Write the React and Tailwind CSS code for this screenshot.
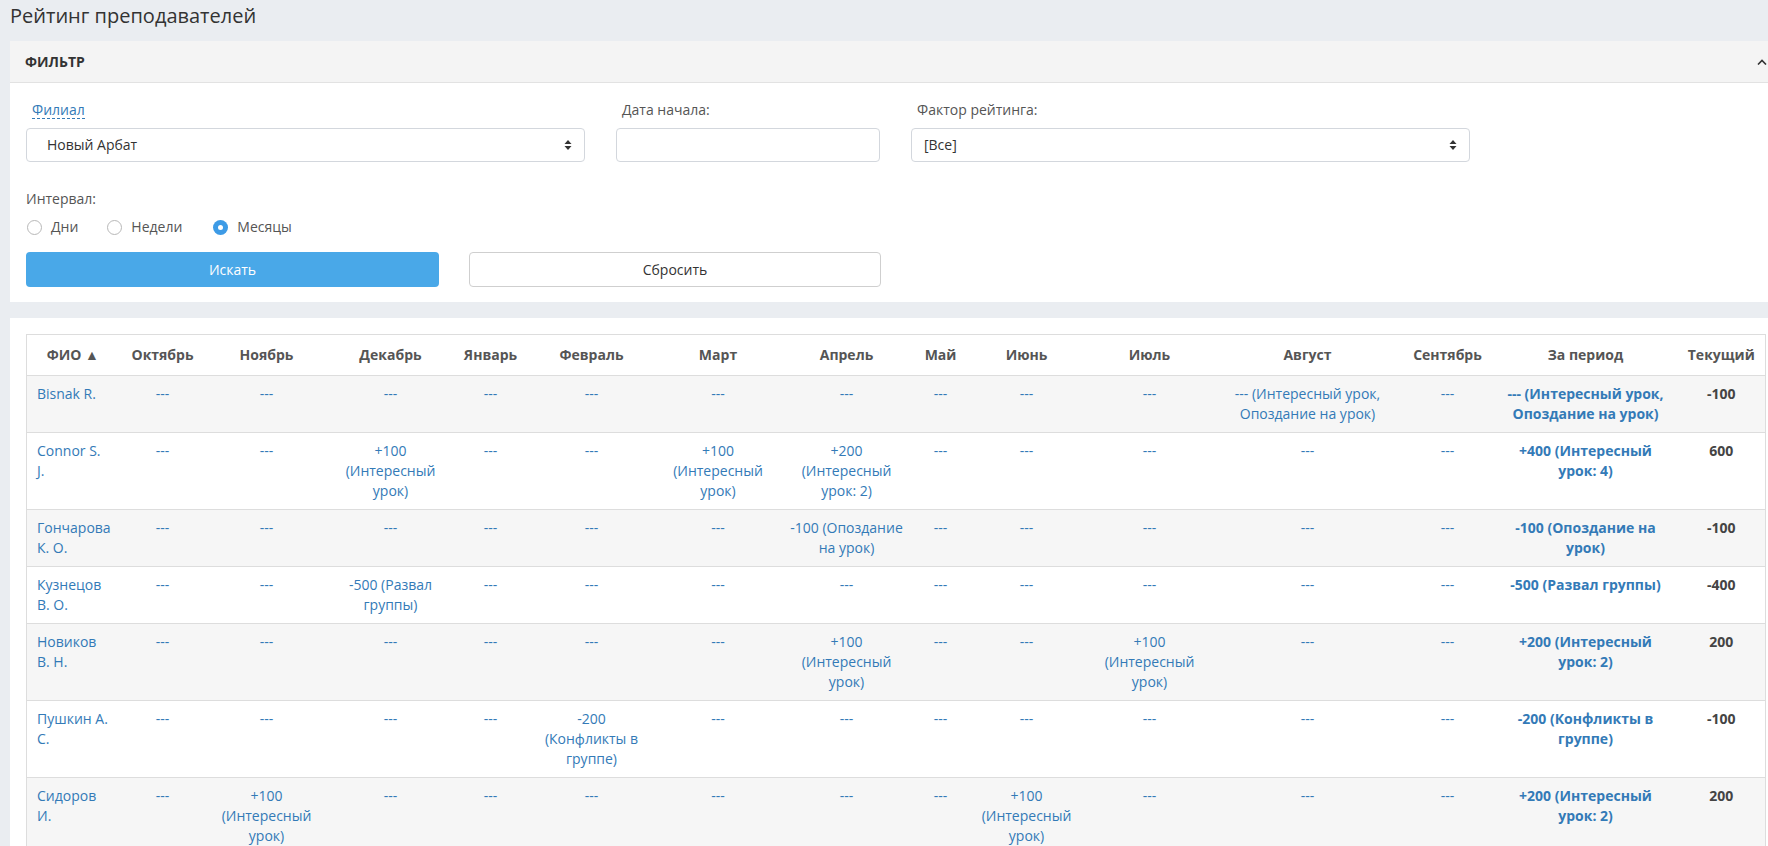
import React from "react";

const D = "---";
const I = ["+100", "(Интересный", "урок)"];

const heads = [
  { t: "ФИО ▲", w: "w-[92px]" },
  { t: "Октябрь", w: "w-[88px]" },
  { t: "Ноябрь", w: "w-[120px]" },
  { t: "Декабрь", w: "w-[128px]" },
  { t: "Январь", w: "w-[72px]" },
  { t: "Февраль", w: "w-[130px]" },
  { t: "Март", w: "w-[123px]" },
  { t: "Апрель", w: "w-[134px]" },
  { t: "Май", w: "w-[54px]" },
  { t: "Июнь", w: "w-[118px]" },
  { t: "Июль", w: "w-[128px]" },
  { t: "Август", w: "w-[188px]" },
  { t: "Сентябрь", w: "w-[92px]" },
  { t: "За период", w: "w-[184px]" },
  { t: "Текущий", w: "w-[88px]" },
];

const rows = [
  {
    name: ["Bisnak R."],
    m: [D, D, D, D, D, D, D, D, D, D, ["--- (Интересный урок,", "Опоздание на урок)"], D],
    total: ["--- (Интересный урок,", "Опоздание на урок)"],
    cur: "-100",
  },
  {
    name: ["Connor S.", "J."],
    m: [D, D, I, D, D, I, ["+200", "(Интересный", "урок: 2)"], D, D, D, D, D],
    total: ["+400 (Интересный", "урок: 4)"],
    cur: "600",
  },
  {
    name: ["Гончарова", "К. О."],
    m: [D, D, D, D, D, D, ["-100 (Опоздание", "на урок)"], D, D, D, D, D],
    total: ["-100 (Опоздание на", "урок)"],
    cur: "-100",
  },
  {
    name: ["Кузнецов", "В. О."],
    m: [D, D, ["-500 (Развал", "группы)"], D, D, D, D, D, D, D, D, D],
    total: ["-500 (Развал группы)"],
    cur: "-400",
  },
  {
    name: ["Новиков", "В. Н."],
    m: [D, D, D, D, D, D, I, D, D, I, D, D],
    total: ["+200 (Интересный", "урок: 2)"],
    cur: "200",
  },
  {
    name: ["Пушкин А.", "С."],
    m: [D, D, D, D, ["-200", "(Конфликты в", "группе)"], D, D, D, D, D, D, D],
    total: ["-200 (Конфликты в", "группе)"],
    cur: "-100",
  },
  {
    name: ["Сидоров", "И."],
    m: [D, I, D, D, D, D, D, D, I, D, D, D],
    total: ["+200 (Интересный", "урок: 2)"],
    cur: "200",
  },
];

const Lines = ({ v }) => {
  const list = Array.isArray(v) ? v : [v];
  return list.map((l, i) => <div key={i}>{l}</div>);
};

const Arrows = () => (
  <svg width="8" height="12" viewBox="0 0 8 12">
    <path d="M0.5 5 L4 1 L7.5 5 Z" fill="#333" />
    <path d="M0.5 7 L4 11 L7.5 7 Z" fill="#333" />
  </svg>
);

const Radio = ({ label, checked, gap }) => (
  <label className={"flex items-center " + gap}>
    {checked ? (
      <span className="ml-[1px] flex h-[15px] w-[15px] items-center justify-center rounded-full bg-[#3d9be6]">
        <span className="h-[5px] w-[5px] rounded-full bg-white" />
      </span>
    ) : (
      <span className="ml-[1px] h-[15px] w-[15px] rounded-full border border-[#b8b8b8] bg-white" />
    )}
    <span className="ml-[9px]">{label}</span>
  </label>
);

export default function App() {
  return (
    <div className="h-[846px] w-[1768px] overflow-hidden bg-[#eaedf1] pl-[10px] font-['Open_Sans',sans-serif] text-[14px] leading-5 text-[#555]">
      <h1 className="h-[41px] text-[20px] leading-[32px] font-normal text-[#333]">
        Рейтинг преподавателей
      </h1>

      <section className="w-[1771px] bg-white">
        <div className="flex h-[42px] items-center justify-between border-b border-[#e2e2e2] bg-[#f4f4f4] pl-[15px] pr-[14px]">
          <span className="font-bold text-[#333]">ФИЛЬТР</span>
          <svg width="10" height="6" viewBox="0 0 10 6">
            <polyline points="1,5.5 5,1.5 9,5.5" fill="none" stroke="#333" strokeWidth="1.6" />
          </svg>
        </div>

        <div className="pl-[16px] pt-[17px] pb-[15px]">
          <div className="grid grid-cols-[559px_264px_559px] gap-x-[31px]">
            <div>
              <div className="h-[20px] pl-[6px]">
                <span className="inline-block border-b border-dashed border-[#337ab7] leading-[17px] text-[#337ab7]">
                  Филиал
                </span>
              </div>
              <div className="mt-[8px] flex h-[34px] items-center justify-between rounded-[4px] border border-[#d3d7dd] pl-[20px] pr-[12px] text-[#333]">
                <span>Новый Арбат</span>
                <Arrows />
              </div>
            </div>
            <div>
              <div className="h-[20px] pl-[6px]">Дата начала:</div>
              <div className="mt-[8px] h-[34px] rounded-[4px] border border-[#d3d7dd]" />
            </div>
            <div>
              <div className="h-[20px] pl-[6px]">Фактор рейтинга:</div>
              <div className="mt-[8px] flex h-[34px] items-center justify-between rounded-[4px] border border-[#d3d7dd] pl-[12px] pr-[12px] text-[#333]">
                <span>[Все]</span>
                <Arrows />
              </div>
            </div>
          </div>

          <div className="mt-[27px] h-[20px]">Интервал:</div>
          <div className="mt-[8px] flex h-[20px] items-center">
            <Radio label="Дни" gap="mr-[28px]" />
            <Radio label="Недели" gap="mr-[30px]" />
            <Radio label="Месяцы" gap="mr-0" checked />
          </div>

          <div className="mt-[15px] grid grid-cols-[413px_412px] gap-x-[30px]">
            <button className="h-[35px] rounded-[4px] bg-[#49a8e8] text-white">Искать</button>
            <button className="h-[35px] rounded-[4px] border border-[#cfcfcf] bg-white text-[#333]">
              Сбросить
            </button>
          </div>
        </div>
      </section>

      <section className="mt-[16px] w-[1771px] bg-white pl-[16px] pt-[16px]">
        <table className="w-[1739px] table-fixed border-collapse border border-[#dddddd]">
          <colgroup>
            {heads.map((h) => (
              <col key={h.t} className={h.w} />
            ))}
          </colgroup>
          <thead>
            <tr>
              {heads.map((h) => (
                <th
                  key={h.t}
                  className="whitespace-nowrap px-2 py-[10px] text-center font-bold leading-5 text-[#555]"
                >
                  {h.t}
                </th>
              ))}
            </tr>
          </thead>
          <tbody>
            {rows.map((r, idx) => (
              <tr
                key={idx}
                className={
                  idx % 2 === 0
                    ? "border-t border-[#dddddd] bg-[#f6f6f6]"
                    : "border-t border-[#dddddd] bg-white"
                }
              >
                <td className="whitespace-nowrap py-2 pl-[10px] pr-2 align-top text-[#337ab7]">
                  <Lines v={r.name} />
                </td>
                {r.m.map((v, i) => (
                  <td key={i} className="whitespace-nowrap px-2 py-2 text-center align-top text-[#337ab7]">
                    <Lines v={v} />
                  </td>
                ))}
                <td className="whitespace-nowrap px-2 py-2 text-center align-top font-bold text-[#337ab7]">
                  <Lines v={r.total} />
                </td>
                <td className="whitespace-nowrap px-2 py-2 text-center align-top font-bold text-[#444]">
                  {r.cur}
                </td>
              </tr>
            ))}
          </tbody>
        </table>
      </section>
    </div>
  );
}
